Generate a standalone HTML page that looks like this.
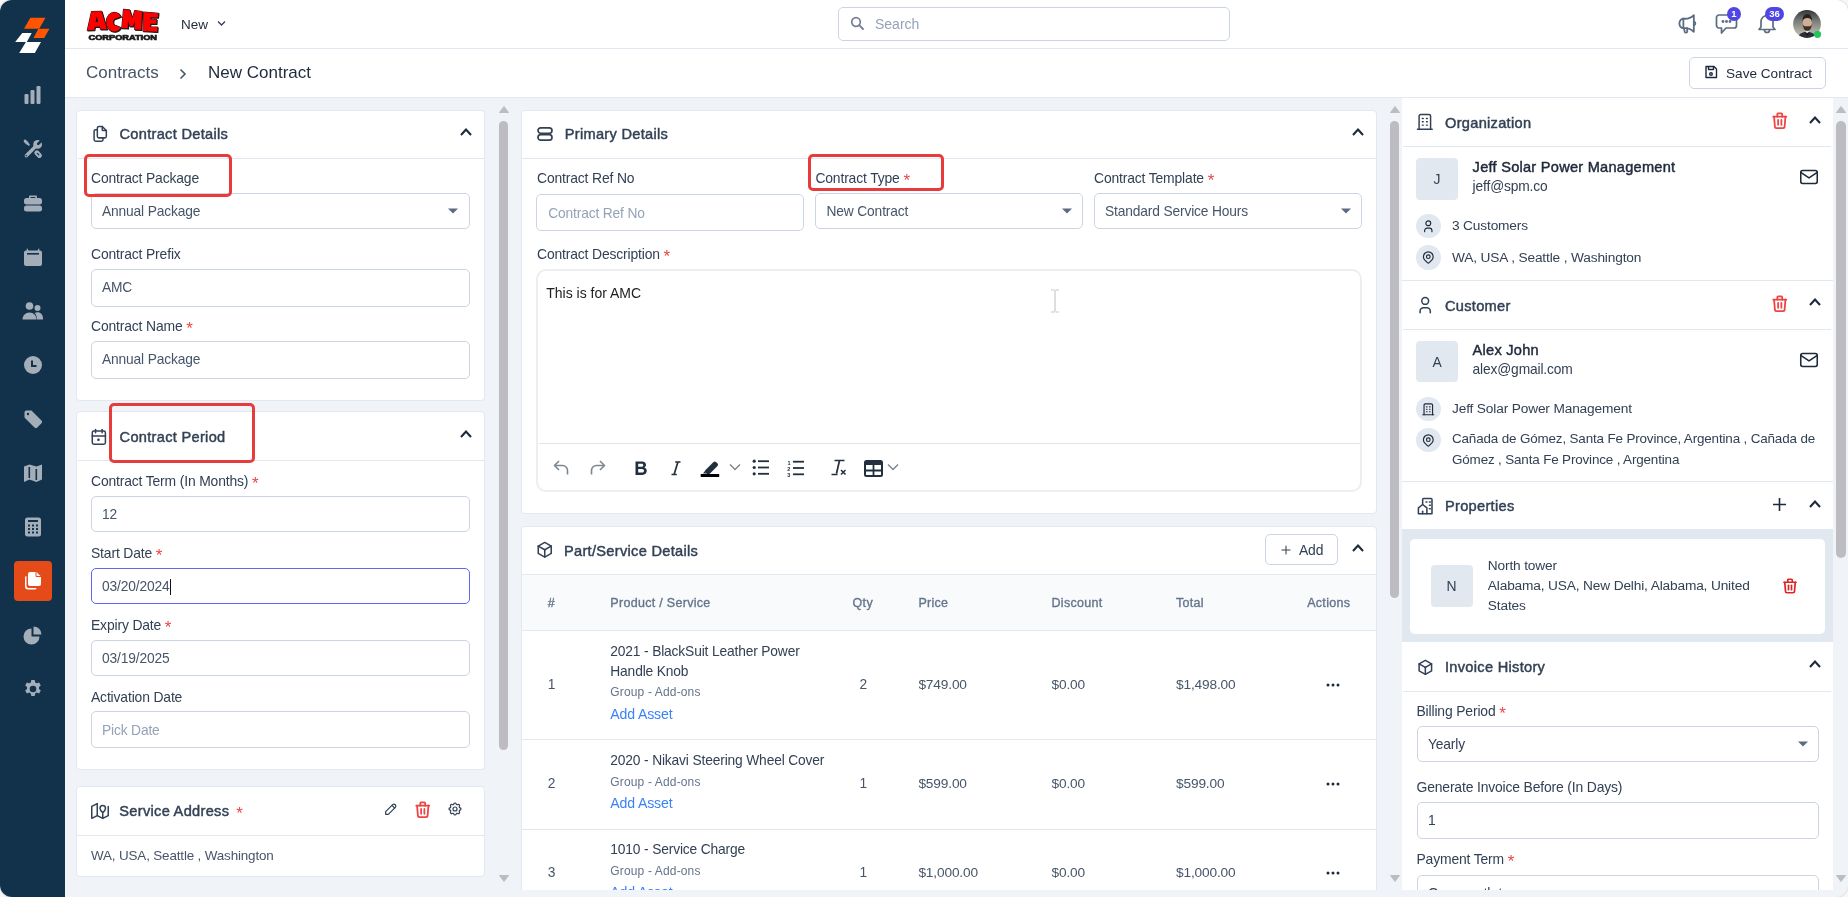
<!DOCTYPE html>
<html><head><meta charset="utf-8">
<style>
*{box-sizing:border-box;margin:0;padding:0}
html,body{width:1848px;height:897px;overflow:hidden;background:#f7f7f7}
body{font-family:"Liberation Sans",sans-serif;color:#334155;position:relative}
.a{position:absolute}
.frame{position:absolute;left:0;top:0;width:1848px;height:897px;border-radius:12px;overflow:hidden;background:#f0f3f8;will-change:transform;box-shadow:0 0 0 1px #e3e3e3}
.side{left:0;top:0;width:65px;height:897px;background:#12314b}
.hdr{left:65px;top:0;width:1783px;height:49px;background:#fff;border-bottom:1px solid #e2e8f0}
.bc{left:65px;top:49px;width:1783px;height:49px;background:#fff;border-bottom:1px solid #e2e8f0}
.card{position:absolute;background:#fff;border:1px solid #e2e8f0;border-radius:6px}
.chd{position:absolute;left:0;top:0;right:0;border-bottom:1px solid #e2e8f0}
.ttl{position:absolute;font-weight:bold;font-size:14.2px;color:#334155;white-space:nowrap}
.lbl{position:absolute;font-size:13.5px;color:#334155;white-space:nowrap}
.req{color:#ef4444}
.inp{position:absolute;border:1px solid #cbd5e1;border-radius:5px;background:#fff}
.val{position:absolute;left:10px;top:50%;transform:translateY(-50%);font-size:13.5px;color:#475569;white-space:nowrap}
.ph{color:#94a3b8}
.caret{position:absolute;right:11px;top:50%;margin-top:-2px;width:0;height:0;border-left:5px solid transparent;border-right:5px solid transparent;border-top:5px solid #5b6b80}
.rbox{position:absolute;border:3px solid #e53935;border-radius:4px}
.txt{position:absolute;white-space:nowrap}
svg{display:block}
.t{position:absolute;white-space:nowrap}
</style></head>
<body>
<div class="frame">

<!-- SIDEBAR -->
<div class="a side">
  <svg class="a" style="left:0;top:0" width="65" height="65" viewBox="0 0 65 65">
    <polygon points="30.3,17.8 45.5,17.8 39.2,28.7 24,28.7" fill="#ff5500"/>
    <polygon points="38.4,28.7 49.5,28.7 44.2,37.9 33.5,37.9" fill="#ff5500"/>
    <polygon points="22.3,33 31.7,33 26.8,41.9 15.2,41.9" fill="#fff"/>
    <polygon points="25.9,41.9 41,41.9 34.8,53 19.2,53" fill="#fff"/>
  </svg>
  <!-- chart -->
  <svg class="a" style="left:23px;top:85px" width="20" height="20" viewBox="0 0 20 20" fill="#a3aeb9">
    <rect x="1.5" y="9" width="4" height="10" rx="1.2"/><rect x="7.5" y="5" width="4" height="14" rx="1.2"/><rect x="13.5" y="1" width="4" height="18" rx="1.2"/>
  </svg>
  <!-- tools -->
  <svg class="a" style="left:23px;top:139px" width="20" height="20" viewBox="0 0 20 20">
    <g stroke-linecap="round" fill="none">
      <path d="M13.8 13.8L16.4 16.4" stroke="#a3aeb9" stroke-width="5"/>
      <path d="M14.3 14.3L15.9 15.9" stroke="#12314b" stroke-width="1.1"/>
      <path d="M1.8 1.8L5.8 5.8" stroke="#a3aeb9" stroke-width="2"/>
      <path d="M2.2 2.2L4 4" stroke="#a3aeb9" stroke-width="3"/>
      <path d="M3.3 16.7L12.5 7.5" stroke="#12314b" stroke-width="5.4"/>
      <path d="M3.3 16.7L12.5 7.5" stroke="#a3aeb9" stroke-width="3.4"/>
    </g>
    <circle cx="14.6" cy="5.4" r="4.4" fill="#a3aeb9"/>
    <path d="M15.2 4.8L18.5 1.5" stroke="#12314b" stroke-width="2.6" stroke-linecap="round"/>
    <circle cx="3.3" cy="16.7" r="0.8" fill="#12314b"/>
  </svg>
  <!-- briefcase -->
  <svg class="a" style="left:23px;top:193px" width="20" height="20" viewBox="0 0 20 20" fill="#a3aeb9">
    <path d="M7 2.5h6a1 1 0 0 1 1 1V5h-1.6V4H7.6v1H6V3.5a1 1 0 0 1 1-1z"/>
    <rect x="1" y="5" width="18" height="6.5" rx="2.5"/>
    <rect x="1" y="12.5" width="18" height="6" rx="2.5"/>
  </svg>
  <!-- calendar -->
  <svg class="a" style="left:23px;top:247px" width="20" height="20" viewBox="0 0 20 20" fill="#a3aeb9">
    <path d="M4 1l1.5 2.5h9L16 1l0.5 2.5H17a2 2 0 0 1 2 2V17a2 2 0 0 1-2 2H3a2 2 0 0 1-2-2V5.5a2 2 0 0 1 2-2h.5z"/>
    <rect x="4" y="6" width="12" height="1.6" fill="#12314b"/>
  </svg>
  <!-- users -->
  <svg class="a" style="left:22px;top:301px" width="22" height="20" viewBox="0 0 22 20" fill="#a3aeb9">
    <circle cx="7.5" cy="5" r="3.8"/><circle cx="15.5" cy="7" r="3"/>
    <path d="M0.5 18.5c0-4 3-7 7-7s7 3 7 7z"/><path d="M15 18.5c0-2.6-0.8-5-2.3-6.6 0.9-0.4 1.9-0.6 2.8-0.6 3.2 0 5.5 2.4 5.5 6.2v1z"/>
  </svg>
  <!-- clock -->
  <svg class="a" style="left:23px;top:355px" width="20" height="20" viewBox="0 0 20 20">
    <circle cx="10" cy="10" r="9" fill="#a3aeb9"/><path d="M9 5.5v5.5h4.5" stroke="#12314b" stroke-width="2" fill="none"/>
  </svg>
  <!-- tag -->
  <svg class="a" style="left:23px;top:409px" width="20" height="20" viewBox="0 0 20 20">
    <path d="M1.5 3.5a2 2 0 0 1 2-2h5l10 10a2 2 0 0 1 0 2.8l-4.2 4.2a2 2 0 0 1-2.8 0l-10-10z" fill="#a3aeb9"/><circle cx="5" cy="5" r="1.2" fill="#12314b"/>
  </svg>
  <!-- map -->
  <svg class="a" style="left:23px;top:463px" width="20" height="20" viewBox="0 0 20 20" fill="#a3aeb9">
    <path d="M1 3.5l5.5-2 7 2 5.5-2v15l-5.5 2.5-7-2.5L1 19z"/>
    <rect x="5.5" y="4" width="1.6" height="11" fill="#12314b"/><rect x="12.5" y="6" width="1.6" height="11" fill="#12314b"/>
  </svg>
  <!-- calculator -->
  <svg class="a" style="left:24px;top:517px" width="18" height="20" viewBox="0 0 18 20">
    <rect x="1" y="0.5" width="16" height="19" rx="2.5" fill="#a3aeb9"/>
    <rect x="4" y="3" width="10" height="2" fill="#12314b"/>
    <g fill="#12314b"><rect x="4" y="7.5" width="2" height="2"/><rect x="8" y="7.5" width="2" height="2"/><rect x="12" y="7.5" width="2" height="2"/><rect x="4" y="11" width="2" height="2"/><rect x="8" y="11" width="2" height="2"/><rect x="12" y="11" width="2" height="2"/><rect x="4" y="14.5" width="2" height="2"/><rect x="8" y="14.5" width="2" height="2"/><rect x="12" y="14.5" width="2" height="2"/></g>
  </svg>
  <!-- active contracts -->
  <div class="a" style="left:14px;top:561px;width:38px;height:40px;background:#e54a19;border-radius:4px"></div>
  <svg class="a" style="left:23px;top:571px" width="20" height="20" viewBox="0 0 20 20" fill="#fff">
    <path d="M7 1h6.5L18 5.5V13a2 2 0 0 1-2 2H7a2 2 0 0 1-2-2V3a2 2 0 0 1 2-2z"/>
    <path d="M2 6.5a1.5 1.5 0 0 1 1.5-1.5v9.5A2.5 2.5 0 0 0 6 17h7.5A1.5 1.5 0 0 1 12 18.5H5A3 3 0 0 1 2 15.5z"/>
    <path d="M13 1v4.5h5" fill="none" stroke="#e54a19" stroke-width="1"/>
  </svg>
  <!-- pie -->
  <svg class="a" style="left:23px;top:625px" width="20" height="20" viewBox="0 0 20 20" fill="#a3aeb9">
    <path d="M8.5 3.5A8 8 0 1 0 16.5 11.5H8.5z"/><path d="M10.5 1.5A8 8 0 0 1 18.5 9.5h-8z"/>
  </svg>
  <!-- gear -->
  <svg class="a" style="left:23px;top:679px" width="20" height="20" viewBox="0 0 20 20">
    <path fill="#a3aeb9" fill-rule="evenodd" d="M8.3 1h3.4l.5 2.4 1.6.9 2.3-.8 1.7 2.9-1.8 1.6v1.9l1.8 1.6-1.7 2.9-2.3-.8-1.6.9-.5 2.4H8.3l-.5-2.4-1.6-.9-2.3.8-1.7-2.9 1.8-1.6V8.1L2.2 6.4l1.7-2.9 2.3.8 1.6-.9zM10 6.7a3.3 3.3 0 1 0 0 6.6 3.3 3.3 0 0 0 0-6.6z"/>
  </svg>
</div>

<!-- HEADER -->
<div class="a hdr">
  <svg class="a" style="left:19px;top:6px" width="80" height="38" viewBox="0 0 80 38">
    <g fill="#ff0000" stroke="#1a1a1a" stroke-width="1.1" stroke-linejoin="round" paint-order="stroke" fill-rule="evenodd">
      <g transform="translate(0.7,0.7)" fill="#1a1a1a">
        <path d="M3.3 24.3L7.5 5.5 17.5 5.3 22.8 23.3 16.5 23.3 15.8 20.5 10.8 20.8 10.2 24z"/>
        <path d="M36.8 10.5A8 9.6 0 1 0 36.8 21.5L31.8 19.5A2.6 3.4 0 1 1 31.8 12.5z"/>
        <path d="M37.8 22L39.5 3.3 45.5 3.9 48.3 12.5 50.8 4.5 58 5.5 57 23.8 50.7 23.5 50.8 15 48.8 20.3 45.8 20.3 44 14 43.8 22.3z"/>
        <path d="M59.5 6L74.3 7.2 73.8 11.5 66.5 11.2 66.3 13.2 72.5 13.5 72.3 17.8 66.2 17.8 66 20.8 73.5 21 73.2 25.7 59 25z"/>
      </g>
      <path d="M3.3 24.3L7.5 5.5 17.5 5.3 22.8 23.3 16.5 23.3 15.8 20.5 10.8 20.8 10.2 24zM11.6 16L12.8 10 14.2 15.8z"/>
      <path d="M36.8 10.5A8 9.6 0 1 0 36.8 21.5L31.8 19.5A2.6 3.4 0 1 1 31.8 12.5z"/>
      <path d="M37.8 22L39.5 3.3 45.5 3.9 48.3 12.5 50.8 4.5 58 5.5 57 23.8 50.7 23.5 50.8 15 48.8 20.3 45.8 20.3 44 14 43.8 22.3z"/>
      <path d="M59.5 6L74.3 7.2 73.8 11.5 66.5 11.2 66.3 13.2 72.5 13.5 72.3 17.8 66.2 17.8 66 20.8 73.5 21 73.2 25.7 59 25z"/>
    </g>
    <text x="4.5" y="33.8" font-family="Liberation Sans" font-weight="bold" font-size="7.6" fill="#1a1a1a" stroke="#1a1a1a" stroke-width="0.7" textLength="68.5" lengthAdjust="spacingAndGlyphs">CORPORATION</text>
  </svg>
  <div class="txt" style="left:116px;top:17px;font-size:13.5px;color:#1e293b">New</div>
  <svg class="a" style="left:152px;top:20px" width="9" height="7" viewBox="0 0 9 7"><path d="M1 1.5l3.5 3.5 3.5-3.5" fill="none" stroke="#334155" stroke-width="1.3"/></svg>
  <div class="a" style="left:773px;top:7px;width:392px;height:34px;border:1px solid #cbd5e1;border-radius:5px"></div>
  <svg class="a" style="left:785px;top:16px" width="15" height="15" viewBox="0 0 15 15"><circle cx="6" cy="6" r="4.3" fill="none" stroke="#748194" stroke-width="1.7"/><path d="M9.2 9.2l3.8 3.8" stroke="#748194" stroke-width="1.9" stroke-linecap="round"/></svg>
  <div class="txt" style="left:810px;top:16px;font-size:14px;color:#94a3b8">Search</div>
  <!-- megaphone -->
  <svg class="a" style="left:1609.5px;top:12.5px" width="23" height="23" viewBox="0 0 22 22" fill="none" stroke="#5b6b80" stroke-width="1.7" stroke-linejoin="round" stroke-linecap="round">
    <path d="M7 5.5h2.5c3 0 6.5-1.5 8.5-3.5v16c-2-2-5.5-3.5-8.5-3.5H7a5 5 0 0 1 0-9z"/>
    <path d="M8 5.5v9"/><path d="M18 8.5a1.5 1.5 0 0 1 0 3"/><path d="M8.5 14.5l.8 3.5a1.3 1.3 0 0 0 2.5-.5l-.3-3"/>
  </svg>
  <!-- chat -->
  <svg class="a" style="left:1650px;top:13px" width="23" height="22" viewBox="0 0 23 22" fill="none" stroke="#5b6b80" stroke-width="1.7" stroke-linejoin="round">
    <path d="M4 2h15a2.5 2.5 0 0 1 2.5 2.5v8A2.5 2.5 0 0 1 19 15h-8l-4.5 5v-5H4a2.5 2.5 0 0 1-2.5-2.5v-8A2.5 2.5 0 0 1 4 2z"/>
    <circle cx="8" cy="8.5" r=".6" fill="#5b6b80"/><circle cx="11.5" cy="8.5" r=".6" fill="#5b6b80"/><circle cx="15" cy="8.5" r=".6" fill="#5b6b80"/>
  </svg>
  <div class="a" style="left:1662px;top:7px;width:14px;height:14px;border-radius:7px;background:#4f46e5;color:#fff;font-size:9.5px;font-weight:bold;text-align:center;line-height:14px">1</div>
  <!-- bell -->
  <svg class="a" style="left:1692px;top:13px" width="20" height="22" viewBox="0 0 20 22" fill="none" stroke="#5b6b80" stroke-width="1.7" stroke-linejoin="round">
    <path d="M10 2.5a6 6 0 0 1 6 6v5.5l2 2.5H2l2-2.5V8.5a6 6 0 0 1 6-6z"/><path d="M7.5 17a2.5 2.5 0 0 0 5 0"/>
  </svg>
  <div class="a" style="left:1700px;top:7px;width:19px;height:14px;border-radius:7px;background:#4f46e5;color:#fff;font-size:9.5px;font-weight:bold;text-align:center;line-height:14px">36</div>
  <!-- avatar -->
  <svg class="a" style="left:1728px;top:10px" width="30" height="30" viewBox="0 0 30 30">
    <defs>
      <linearGradient id="abg" x1="0" y1="0" x2="0" y2="1"><stop offset="0" stop-color="#2f3536"/><stop offset="0.35" stop-color="#777a76"/><stop offset="0.8" stop-color="#bdb9ab"/><stop offset="1" stop-color="#9a978c"/></linearGradient>
      <clipPath id="acc"><circle cx="14" cy="14" r="13.9"/></clipPath>
    </defs>
    <g clip-path="url(#acc)">
      <rect width="30" height="30" fill="url(#abg)"/>
      <path d="M3 30c1.5-5 5-8 11-8.5 6 .5 9.5 3.5 11 8.5z" fill="#2c3035"/>
      <path d="M12 20.5l2.2 3.2 2.3-3.2z" fill="#e6e6e6"/>
      <path d="M12.5 24l2-1.3 2 1.3-2 1.2z" fill="#15181b"/>
      <ellipse cx="14.3" cy="12.8" rx="4.6" ry="6.6" fill="#cfae96"/>
      <path d="M9.6 11.5c-.3-5 1.8-7.6 4.7-7.6s5 2.6 4.7 7.6c-.5-2.3-1.8-3.5-4.7-3.5s-4.2 1.2-4.7 3.5z" fill="#262220"/>
      <path d="M9.8 14c.3 4.8 2 6.8 4.5 6.8s4.2-2 4.5-6.8c-.6 1.8-1.6 2.6-4.5 2.6s-3.9-.8-4.5-2.6z" fill="#3d3029"/>
      <path d="M12.2 16.6h4.2" stroke="#5a4338" stroke-width=".8"/>
    </g>
    <circle cx="24.5" cy="24.3" r="3.6" fill="#22c55e"/>
  </svg>
</div>
<div class="a bc">
  <div class="txt" style="left:21px;top:14px;font-size:17px;color:#475569">Contracts</div>
  <svg class="a" style="left:113px;top:19px" width="9" height="12" viewBox="0 0 9 12"><path d="M2.5 1.5l4.5 4.5-4.5 4.5" fill="none" stroke="#475569" stroke-width="1.6"/></svg>
  <div class="txt" style="left:143px;top:14px;font-size:17px;color:#1e293b">New Contract</div>
  <div class="a" style="left:1624px;top:8px;width:137px;height:32px;border:1px solid #cbd5e1;border-radius:5px;background:#fff"></div>
  <svg class="a" style="left:1639px;top:16px" width="14" height="14" viewBox="0 0 14 14" fill="none" stroke="#1e293b" stroke-width="1.4" stroke-linejoin="round"><path d="M2 1.5h8l2.5 2.5v8.5H2z"/><path d="M4.5 1.5v3h5v-3"/><circle cx="7" cy="9" r="1.3"/></svg>
  <div class="txt" style="left:1661px;top:17px;font-size:13.6px;color:#1e293b">Save Contract</div>
</div>

<div class="a" style="left:76px;top:110px;width:409px;height:291px;background:#fff;border:1px solid #e2e8f0;border-radius:4px;"></div>
<div class="a" style="left:78px;top:158px;width:406px;height:1px;background:#e2e8f0"></div>
<svg class="a" style="left:89.9px;top:123.75px;" width="19.6" height="19.6" viewBox="0 0 24 24"><g fill="none" stroke="#334155" stroke-width="1.85" stroke-linecap="round" stroke-linejoin="round"><path d="M15 3v4a1 1 0 0 0 1 1h4"/><path d="M18 17h-7a2 2 0 0 1-2-2V5a2 2 0 0 1 2-2h4l5 5v7a2 2 0 0 1-2 2z"/><path d="M16 17v2a2 2 0 0 1-2 2H7a2 2 0 0 1-2-2V9a2 2 0 0 1 2-2h2"/></g></svg>
<div class="t " style="left:119.5px;top:124px;font-size:14.6px;line-height:20px;color:#334155;-webkit-text-stroke:0.45px #334155;letter-spacing:0.3px;">Contract Details</div>
<svg class="a" style="left:459px;top:126.69999999999999px;" width="14" height="10" viewBox="0 0 14 10"><path d="M2 8L7 2.6 12 8" fill="none" stroke="#1e293b" stroke-width="2.1" stroke-linejoin="miter"/></svg>
<div class="t " style="left:91px;top:168px;font-size:13.9px;line-height:20px;color:#334155;letter-spacing:-0.15px;">Contract Package</div>
<div class="a" style="left:91px;top:193.3px;width:378.5px;height:36.2px;background:#fff;border:1px solid #cbd5e1;border-radius:5px"></div>
<div class="t " style="left:102px;top:202px;font-size:13.79px;line-height:19px;color:#475569;letter-spacing:-0.15px;">Annual Package</div>
<svg class="a" style="left:448px;top:208px;" width="10" height="6" viewBox="0 0 10 6"><path d="M0 0.5h10L5 5.5z" fill="#5b6b80"/></svg>
<div class="a" style="left:84.4px;top:153.6px;width:148.1px;height:43.099999999999994px;border:3.5px solid #e83b3b;border-radius:5px"></div>
<div class="t " style="left:91px;top:244px;font-size:13.9px;line-height:20px;color:#334155;letter-spacing:-0.15px;">Contract Prefix</div>
<div class="a" style="left:91px;top:269px;width:378.5px;height:37.5px;background:#fff;border:1px solid #cbd5e1;border-radius:5px"></div>
<div class="t " style="left:102px;top:278px;font-size:13.79px;line-height:19px;color:#475569;letter-spacing:-0.15px;">AMC</div>
<div class="t " style="left:91px;top:316px;font-size:13.9px;line-height:20px;color:#334155;letter-spacing:-0.15px;">Contract Name <span style="color:#ef4444;font-size:17px;line-height:0;vertical-align:-2.5px">*</span></div>
<div class="a" style="left:91px;top:341px;width:378.5px;height:37.5px;background:#fff;border:1px solid #cbd5e1;border-radius:5px"></div>
<div class="t " style="left:102px;top:350px;font-size:13.79px;line-height:19px;color:#475569;letter-spacing:-0.15px;">Annual Package</div>
<div class="a" style="left:76px;top:411px;width:409px;height:359px;background:#fff;border:1px solid #e2e8f0;border-radius:4px;"></div>
<div class="a" style="left:78px;top:460px;width:406px;height:1px;background:#e2e8f0"></div>
<svg class="a" style="left:89.4px;top:426.5px;" width="19.7" height="19.7" viewBox="0 0 24 24"><g fill="none" stroke="#334155" stroke-width="1.85" stroke-linecap="round" stroke-linejoin="round"><rect x="4" y="5" width="16" height="16" rx="2"/><path d="M16 3v4"/><path d="M8 3v4"/><path d="M4 11h16"/><path d="M11 15h1v1h-1z"/></g></svg>
<div class="t " style="left:119.6px;top:427px;font-size:14.6px;line-height:20px;color:#334155;-webkit-text-stroke:0.45px #334155;letter-spacing:0.3px;">Contract Period</div>
<svg class="a" style="left:459px;top:428.7px;" width="14" height="10" viewBox="0 0 14 10"><path d="M2 8L7 2.6 12 8" fill="none" stroke="#1e293b" stroke-width="2.1" stroke-linejoin="miter"/></svg>
<div class="t " style="left:91px;top:471px;font-size:13.9px;line-height:20px;color:#334155;letter-spacing:-0.15px;">Contract Term (In Months) <span style="color:#ef4444;font-size:17px;line-height:0;vertical-align:-2.5px">*</span></div>
<div class="a" style="left:91px;top:495.6px;width:378.5px;height:36.8px;background:#fff;border:1px solid #cbd5e1;border-radius:5px"></div>
<div class="t " style="left:102px;top:505px;font-size:13.79px;line-height:19px;color:#475569;letter-spacing:-0.15px;">12</div>
<div class="t " style="left:91px;top:543px;font-size:13.9px;line-height:20px;color:#334155;letter-spacing:-0.15px;">Start Date <span style="color:#ef4444;font-size:17px;line-height:0;vertical-align:-2.5px">*</span></div>
<div class="a" style="left:91px;top:567.5px;width:378.5px;height:36.8px;background:#fff;border:1px solid #6366f1;border-radius:5px"></div>
<div class="t " style="left:102px;top:577px;font-size:13.79px;line-height:19px;color:#475569;letter-spacing:-0.15px;">03/20/2024</div>
<div class="t " style="left:91px;top:615px;font-size:13.9px;line-height:20px;color:#334155;letter-spacing:-0.15px;">Expiry Date <span style="color:#ef4444;font-size:17px;line-height:0;vertical-align:-2.5px">*</span></div>
<div class="a" style="left:91px;top:639.7px;width:378.5px;height:36.8px;background:#fff;border:1px solid #cbd5e1;border-radius:5px"></div>
<div class="t " style="left:102px;top:649px;font-size:13.79px;line-height:19px;color:#475569;letter-spacing:-0.15px;">03/19/2025</div>
<div class="t " style="left:91px;top:687px;font-size:13.9px;line-height:20px;color:#334155;letter-spacing:-0.15px;">Activation Date</div>
<div class="a" style="left:91px;top:711.4px;width:378.5px;height:36.8px;background:#fff;border:1px solid #cbd5e1;border-radius:5px"></div>
<div class="t " style="left:102px;top:721px;font-size:13.79px;line-height:19px;color:#94a3b8;letter-spacing:-0.15px;">Pick Date</div>
<div class="a" style="left:169.8px;top:579px;width:1.6px;height:16px;background:#111"></div>
<div class="a" style="left:108.6px;top:403px;width:146.9px;height:60.30000000000001px;border:3.5px solid #e83b3b;border-radius:5px"></div>
<div class="a" style="left:76px;top:785.5px;width:409px;height:91px;background:#fff;border:1px solid #e2e8f0;border-radius:4px;"></div>
<div class="a" style="left:77px;top:835px;width:407px;height:1px;background:#e2e8f0"></div>
<svg class="a" style="left:88.75px;top:799.6px;" width="22" height="22" viewBox="0 0 24 24"><g fill="none" stroke="#334155" stroke-width="1.65" stroke-linecap="round" stroke-linejoin="round"><path d="M9 4L3 7v13l6-3 6 3 6-3V7"/><path d="M9 4v13"/><path d="M15 15v5"/><path d="M18 9a3 3 0 1 0-6 0c0 2 3 5 3 5s3-3 3-5z"/></g></svg>
<div class="t " style="left:119.3px;top:801px;font-size:14.6px;line-height:20px;color:#334155;-webkit-text-stroke:0.45px #334155;letter-spacing:0.3px;">Service Address<span style="color:#ef4444;margin-left:7px;-webkit-text-stroke:0;font-size:17px;line-height:0;vertical-align:-2.5px">*</span></div>
<svg class="a" style="left:383px;top:801px;" width="16" height="16" viewBox="0 0 24 24"><g fill="none" stroke="#334155" stroke-width="1.8" stroke-linecap="round" stroke-linejoin="round"><path d="M4 20h4L18.5 9.5a2.83 2.83 0 0 0-4-4L4 16v4"/><path d="M13.5 6.5l4 4"/></g></svg>
<svg class="a" style="left:413.3px;top:799.6px;" width="19.5" height="19.5" viewBox="0 0 24 24"><g fill="none" stroke="#ef4444" stroke-width="2.2" stroke-linecap="round" stroke-linejoin="round"><path d="M4 7h16"/><path d="M10 11v6"/><path d="M14 11v6"/><path d="M5 7l1 12a2 2 0 0 0 2 2h8a2 2 0 0 0 2-2l1-12"/><path d="M9 7V4a1 1 0 0 1 1-1h4a1 1 0 0 1 1 1v3"/></g></svg>
<svg class="a" style="left:446.5px;top:801px;" width="16" height="16" viewBox="0 0 24 24"><g fill="none" stroke="#334155" stroke-width="1.8" stroke-linecap="round" stroke-linejoin="round"><path d="M10.33 4.32c.43-1.76 2.93-1.76 3.35 0a1.72 1.72 0 0 0 2.57 1.07c1.54-.94 3.31.83 2.37 2.37a1.72 1.72 0 0 0 1.07 2.57c1.76.43 1.76 2.93 0 3.35a1.72 1.72 0 0 0-1.07 2.57c.94 1.54-.83 3.31-2.37 2.37a1.72 1.72 0 0 0-2.57 1.07c-.43 1.76-2.93 1.76-3.35 0a1.72 1.72 0 0 0-2.57-1.07c-1.54.94-3.31-.83-2.37-2.37a1.72 1.72 0 0 0-1.07-2.57c-1.76-.43-1.76-2.93 0-3.35a1.72 1.72 0 0 0 1.07-2.57c-.94-1.54.83-3.31 2.37-2.37 1 .61 2.3.07 2.57-1.07z"/><circle cx="12" cy="12" r="3"/></g></svg>
<div class="t " style="left:91px;top:846px;font-size:13.43px;line-height:19px;color:#475569;letter-spacing:-0.15px;">WA, USA, Seattle , Washington</div>
<svg class="a" style="left:498.7px;top:106px;" width="10" height="7" viewBox="0 0 10 7"><path d="M0.5 6.5h9L5 0.5z" fill="#bdbcc2" stroke="#bdbcc2" stroke-width="1" stroke-linejoin="round"/></svg>
<div class="a" style="left:499.0px;top:121px;width:9.4px;height:628.6px;background:#bdbcc2;border-radius:5px"></div>
<svg class="a" style="left:498.7px;top:875px;" width="10" height="7" viewBox="0 0 10 7"><path d="M0.5 0.5h9L5 6.5z" fill="#bdbcc2" stroke="#bdbcc2" stroke-width="1" stroke-linejoin="round"/></svg>
<div class="a" style="left:521px;top:110px;width:856px;height:404px;background:#fff;border:1px solid #e2e8f0;border-radius:4px;"></div>
<div class="a" style="left:522px;top:158px;width:854px;height:1px;background:#e2e8f0"></div>
<svg class="a" style="left:537px;top:126.5px;" width="16" height="14" viewBox="0 0 16 14"><g fill="none" stroke="#334155" stroke-width="1.7"><rect x="1" y="0.9" width="14" height="5.4" rx="2.7"/><rect x="1" y="7.7" width="14" height="5.4" rx="2.7"/></g></svg>
<div class="t " style="left:564.7px;top:124px;font-size:14.6px;line-height:20px;color:#334155;-webkit-text-stroke:0.45px #334155;letter-spacing:0.3px;">Primary Details</div>
<svg class="a" style="left:1351px;top:126.6px;" width="14" height="10" viewBox="0 0 14 10"><path d="M2 8L7 2.6 12 8" fill="none" stroke="#1e293b" stroke-width="2.1" stroke-linejoin="miter"/></svg>
<div class="t " style="left:537px;top:168px;font-size:13.9px;line-height:20px;color:#334155;letter-spacing:-0.15px;">Contract Ref No</div>
<div class="t " style="left:815.4px;top:168px;font-size:13.9px;line-height:20px;color:#334155;letter-spacing:-0.15px;">Contract Type <span style="color:#ef4444;font-size:17px;line-height:0;vertical-align:-2.5px">*</span></div>
<div class="t " style="left:1094px;top:168px;font-size:13.9px;line-height:20px;color:#334155;letter-spacing:-0.15px;">Contract Template <span style="color:#ef4444;font-size:17px;line-height:0;vertical-align:-2.5px">*</span></div>
<div class="a" style="left:536.4px;top:194.2px;width:267.2px;height:37.3px;background:#fff;border:1px solid #cbd5e1;border-radius:5px"></div>
<div class="t " style="left:548.2px;top:204px;font-size:13.79px;line-height:19px;color:#94a3b8;letter-spacing:-0.15px;">Contract Ref No</div>
<div class="a" style="left:815px;top:193.3px;width:267.8px;height:36.2px;background:#fff;border:1px solid #cbd5e1;border-radius:5px"></div>
<div class="t " style="left:826.5px;top:202px;font-size:13.79px;line-height:19px;color:#475569;letter-spacing:-0.15px;">New Contract</div>
<svg class="a" style="left:1062px;top:208px;" width="10" height="6" viewBox="0 0 10 6"><path d="M0 0.5h10L5 5.5z" fill="#5b6b80"/></svg>
<div class="a" style="left:1094px;top:193.3px;width:267.5px;height:36.2px;background:#fff;border:1px solid #cbd5e1;border-radius:5px"></div>
<div class="t " style="left:1105px;top:202px;font-size:13.79px;line-height:19px;color:#475569;letter-spacing:-0.15px;">Standard Service Hours</div>
<svg class="a" style="left:1340.5px;top:208px;" width="10" height="6" viewBox="0 0 10 6"><path d="M0 0.5h10L5 5.5z" fill="#5b6b80"/></svg>
<div class="a" style="left:808.4px;top:153.6px;width:135.30000000000007px;height:37.0px;border:3.5px solid #e83b3b;border-radius:5px"></div>
<div class="t " style="left:537px;top:244px;font-size:13.9px;line-height:20px;color:#334155;letter-spacing:-0.15px;">Contract Description <span style="color:#ef4444;font-size:17px;line-height:0;vertical-align:-2.5px">*</span></div>
<div class="a" style="left:536px;top:269px;width:825.5px;height:223px;border:2px solid #eeeeee;border-radius:10px;background:#fff"></div>
<div class="a" style="left:538.5px;top:443px;width:821px;height:1px;background:#e3e3e3"></div>
<div class="t " style="left:546.2px;top:283px;font-size:14px;line-height:20px;color:#222222;letter-spacing:0;">This is for AMC</div>
<svg class="a" style="left:1050px;top:289px;" width="10" height="24" viewBox="0 0 10 24"><path d="M1 1h3.5M5.5 1H9M1 23h3.5M5.5 23H9M5 1.5v21" stroke="#c8c8c8" stroke-width="1.2" fill="none"/></svg>
<svg class="a" style="left:552px;top:458px;" width="18" height="18" viewBox="0 0 18 18"><path d="M7 3L2.5 7.5 7 12" fill="none" stroke="#7e8791" stroke-width="1.6" stroke-linejoin="round"/><path d="M3 7.5h7.5a5 5 0 0 1 5 5v4" fill="none" stroke="#7e8791" stroke-width="1.6"/></svg>
<svg class="a" style="left:589px;top:458px;" width="18" height="18" viewBox="0 0 18 18"><path d="M11 3l4.5 4.5L11 12" fill="none" stroke="#7e8791" stroke-width="1.6" stroke-linejoin="round"/><path d="M15 7.5H7.5a5 5 0 0 0-5 5v4" fill="none" stroke="#7e8791" stroke-width="1.6"/></svg>
<svg class="a" style="left:634.5px;top:461px;" width="13" height="14.5" viewBox="0 0 13 14.5"><path fill-rule="evenodd" fill="#222f3e" d="M0.5 0.5H7C9.5 0.5 11 2 11 3.7C11 5 10.3 5.9 9.3 6.4C10.8 6.9 11.8 8.1 11.8 9.8C11.8 12 10 13.9 7.3 13.9H0.5ZM3.2 2.7V5.8H6.6C7.7 5.8 8.3 5.1 8.3 4.25C8.3 3.35 7.7 2.7 6.6 2.7ZM3.2 7.9V11.6H7C8.3 11.6 9 10.8 9 9.75C9 8.7 8.3 7.9 7 7.9Z"/></svg>
<svg class="a" style="left:670.5px;top:461px;" width="10" height="14.5" viewBox="0 0 10 14.5"><path d="M4.2 1h5.3M0.5 13.5h5.3M6.9 1L3.1 13.5" fill="none" stroke="#222f3e" stroke-width="1.7"/></svg>
<svg class="a" style="left:700px;top:459px;" width="20" height="19" viewBox="0 0 20 19"><path d="M4.5 12.5l2.5 2.5h2.5l8-8a1.8 1.8 0 0 0 0-2.5l-1.5-1.5a1.8 1.8 0 0 0-2.5 0l-8 8z" fill="#222f3e"/><path d="M4.5 12.5L3 14.5h4z" fill="#222f3e"/><rect x="0.7" y="15" width="18.5" height="3" fill="#000"/></svg>
<svg class="a" style="left:729px;top:463px;" width="12" height="9" viewBox="0 0 12 9"><path d="M1 1.5l5 5 5-5" fill="none" stroke="#7e8791" stroke-width="1.5"/></svg>
<svg class="a" style="left:752px;top:459px;" width="18" height="17" viewBox="0 0 18 17"><g fill="#222f3e"><circle cx="2.2" cy="2.2" r="1.6"/><circle cx="2.2" cy="8.5" r="1.6"/><circle cx="2.2" cy="14.8" r="1.6"/><rect x="6" y="1.3" width="11" height="1.8"/><rect x="6" y="7.6" width="11" height="1.8"/><rect x="6" y="13.9" width="11" height="1.8"/></g></svg>
<svg class="a" style="left:786.5px;top:459px;" width="18" height="18" viewBox="0 0 18 18"><g fill="#222f3e"><rect x="6" y="1.8" width="11" height="1.8"/><rect x="6" y="8.1" width="11" height="1.8"/><rect x="6" y="14.4" width="11" height="1.8"/></g><text x="0.5" y="5.5" font-size="5.5" font-family="Liberation Sans" font-weight="bold" fill="#222f3e">1</text><text x="0.3" y="11.5" font-size="5.5" font-family="Liberation Sans" font-weight="bold" fill="#222f3e">2</text><text x="0.3" y="17.5" font-size="5.5" font-family="Liberation Sans" font-weight="bold" fill="#222f3e">3</text></svg>
<svg class="a" style="left:830px;top:459px;" width="18" height="18" viewBox="0 0 18 18"><path d="M4.5 1.5h10M9.5 1.5l-3 13M1.5 15.5h6" fill="none" stroke="#222f3e" stroke-width="1.7"/><path d="M11 11l4.5 4.5M15.5 11L11 15.5" fill="none" stroke="#222f3e" stroke-width="1.5"/></svg>
<svg class="a" style="left:863.5px;top:459.5px;" width="19" height="17" viewBox="0 0 19 17"><rect x="1" y="1" width="17" height="15" rx="1.5" fill="none" stroke="#222f3e" stroke-width="2"/><rect x="1" y="1" width="17" height="4" fill="#222f3e"/><path d="M9.5 5v11M1 10.5h17" stroke="#222f3e" stroke-width="1.8"/></svg>
<svg class="a" style="left:887px;top:463px;" width="12" height="9" viewBox="0 0 12 9"><path d="M1 1.5l5 5 5-5" fill="none" stroke="#7e8791" stroke-width="1.5"/></svg>
<div class="a" style="left:521px;top:526px;width:856px;height:364px;overflow:hidden">
<div class="a" style="left:0px;top:0px;width:856px;height:420px;background:#fff;border:1px solid #e2e8f0;border-radius:4px;"></div>
<div class="a" style="left:1px;top:48px;width:854px;height:1px;background:#e2e8f0"></div>
<svg class="a" style="left:14.299999999999955px;top:14.299999999999955px;" width="19.5" height="19.5" viewBox="0 0 24 24"><g fill="none" stroke="#334155" stroke-width="1.9" stroke-linecap="round" stroke-linejoin="round"><path d="M12 3l8 4.5v9L12 21l-8-4.5v-9z"/><path d="M12 12l8-4.5"/><path d="M12 12v9"/><path d="M12 12L4 7.5"/></g></svg>
<div class="t " style="left:43px;top:15px;font-size:14.6px;line-height:20px;color:#334155;-webkit-text-stroke:0.45px #334155;letter-spacing:0.3px;">Part/Service Details</div>
<div class="a" style="left:743.5px;top:8.3px;width:73px;height:31.2px;border:1px solid #cbd5e1;border-radius:5px;background:#fff"></div>
<svg class="a" style="left:758px;top:16.5px;" width="14" height="14" viewBox="0 0 24 24"><g fill="none" stroke="#334155" stroke-width="1.8" stroke-linecap="round" stroke-linejoin="round"><path d="M12 5v14"/><path d="M5 12h14"/></g></svg>
<div class="t " style="left:778px;top:14px;font-size:13.9px;line-height:20px;color:#334155;letter-spacing:-0.15px;">Add</div>
<svg class="a" style="left:830px;top:17px;" width="14" height="10" viewBox="0 0 14 10"><path d="M2 8L7 2.6 12 8" fill="none" stroke="#1e293b" stroke-width="2.1" stroke-linejoin="miter"/></svg>
<div class="a" style="left:1px;top:49px;width:854px;height:55.5px;background:#f8fafc"></div>
<div class="a" style="left:1px;top:104.4px;width:854px;height:1px;background:#e2e8f0"></div>
<div class="t " style="left:26.700000000000045px;top:68px;font-size:12.5px;line-height:18px;color:#64748b;-webkit-text-stroke:0.45px #64748b;letter-spacing:0.3px;-webkit-text-stroke-width:0.35px;">#</div>
<div class="t " style="left:89.29999999999995px;top:68px;font-size:12.5px;line-height:18px;color:#64748b;-webkit-text-stroke:0.45px #64748b;letter-spacing:0.3px;-webkit-text-stroke-width:0.35px;">Product / Service</div>
<div class="t " style="left:331.6px;top:68px;font-size:12.5px;line-height:18px;color:#64748b;-webkit-text-stroke:0.45px #64748b;letter-spacing:0.3px;-webkit-text-stroke-width:0.35px;">Qty</div>
<div class="t " style="left:397.4px;top:68px;font-size:12.5px;line-height:18px;color:#64748b;-webkit-text-stroke:0.45px #64748b;letter-spacing:0.3px;-webkit-text-stroke-width:0.35px;">Price</div>
<div class="t " style="left:530.5px;top:68px;font-size:12.5px;line-height:18px;color:#64748b;-webkit-text-stroke:0.45px #64748b;letter-spacing:0.3px;-webkit-text-stroke-width:0.35px;">Discount</div>
<div class="t " style="left:655px;top:68px;font-size:12.5px;line-height:18px;color:#64748b;-webkit-text-stroke:0.45px #64748b;letter-spacing:0.3px;-webkit-text-stroke-width:0.35px;">Total</div>
<div class="t " style="left:786.2px;top:68px;font-size:12.5px;line-height:18px;color:#64748b;-webkit-text-stroke:0.45px #64748b;letter-spacing:0.3px;-webkit-text-stroke-width:0.35px;">Actions</div>
<div class="t " style="left:26.700000000000045px;top:149px;font-size:13.79px;line-height:19px;color:#475569;letter-spacing:-0.15px;">1</div>
<div class="t " style="left:89.29999999999995px;top:116px;font-size:13.79px;line-height:19px;color:#334155;letter-spacing:-0.15px;">2021 - BlackSuit Leather Power</div>
<div class="t " style="left:89.29999999999995px;top:136px;font-size:13.79px;line-height:19px;color:#334155;letter-spacing:-0.15px;">Handle Knob</div>
<div class="t " style="left:89.29999999999995px;top:157px;font-size:12.0px;line-height:18px;color:#64748b;letter-spacing:0.15px;">Group - Add-ons</div>
<div class="t " style="left:89.29999999999995px;top:178px;font-size:14.1px;line-height:20px;color:#3b82f6;letter-spacing:-0.15px;">Add Asset</div>
<div class="t " style="left:338.5px;top:149px;font-size:13.79px;line-height:19px;color:#475569;letter-spacing:-0.15px;">2</div>
<div class="t " style="left:397.4px;top:149px;font-size:13.69px;line-height:19px;color:#475569;letter-spacing:-0.15px;">$749.00</div>
<div class="t " style="left:530.5px;top:149px;font-size:13.69px;line-height:19px;color:#475569;letter-spacing:-0.15px;">$0.00</div>
<div class="t " style="left:655px;top:149px;font-size:13.69px;line-height:19px;color:#475569;letter-spacing:-0.15px;">$1,498.00</div>
<svg class="a" style="left:805px;top:157px;" width="14" height="4" viewBox="0 0 14 4"><g fill="#1e293b"><circle cx="2" cy="2" r="1.5"/><circle cx="7" cy="2" r="1.5"/><circle cx="12" cy="2" r="1.5"/></g></svg>
<div class="a" style="left:1px;top:213px;width:854px;height:1px;background:#e2e8f0"></div>
<div class="t " style="left:26.700000000000045px;top:248px;font-size:13.79px;line-height:19px;color:#475569;letter-spacing:-0.15px;">2</div>
<div class="t " style="left:89.29999999999995px;top:225px;font-size:13.79px;line-height:19px;color:#334155;letter-spacing:-0.15px;">2020 - Nikavi Steering Wheel Cover</div>
<div class="t " style="left:89.29999999999995px;top:247px;font-size:12.0px;line-height:18px;color:#64748b;letter-spacing:0.15px;">Group - Add-ons</div>
<div class="t " style="left:89.29999999999995px;top:267px;font-size:14.1px;line-height:20px;color:#3b82f6;letter-spacing:-0.15px;">Add Asset</div>
<div class="t " style="left:338.5px;top:248px;font-size:13.79px;line-height:19px;color:#475569;letter-spacing:-0.15px;">1</div>
<div class="t " style="left:397.4px;top:248px;font-size:13.69px;line-height:19px;color:#475569;letter-spacing:-0.15px;">$599.00</div>
<div class="t " style="left:530.5px;top:248px;font-size:13.69px;line-height:19px;color:#475569;letter-spacing:-0.15px;">$0.00</div>
<div class="t " style="left:655px;top:248px;font-size:13.69px;line-height:19px;color:#475569;letter-spacing:-0.15px;">$599.00</div>
<svg class="a" style="left:805px;top:256px;" width="14" height="4" viewBox="0 0 14 4"><g fill="#1e293b"><circle cx="2" cy="2" r="1.5"/><circle cx="7" cy="2" r="1.5"/><circle cx="12" cy="2" r="1.5"/></g></svg>
<div class="a" style="left:1px;top:302.5px;width:854px;height:1px;background:#e2e8f0"></div>
<div class="t " style="left:26.700000000000045px;top:337px;font-size:13.79px;line-height:19px;color:#475569;letter-spacing:-0.15px;">3</div>
<div class="t " style="left:89.29999999999995px;top:314px;font-size:13.79px;line-height:19px;color:#334155;letter-spacing:-0.15px;">1010 - Service Charge</div>
<div class="t " style="left:89.29999999999995px;top:336px;font-size:12.0px;line-height:18px;color:#64748b;letter-spacing:0.15px;">Group - Add-ons</div>
<div class="t " style="left:89.29999999999995px;top:356px;font-size:14.1px;line-height:20px;color:#3b82f6;letter-spacing:-0.15px;">Add Asset</div>
<div class="t " style="left:338.5px;top:337px;font-size:13.79px;line-height:19px;color:#475569;letter-spacing:-0.15px;">1</div>
<div class="t " style="left:397.4px;top:337px;font-size:13.69px;line-height:19px;color:#475569;letter-spacing:-0.15px;">$1,000.00</div>
<div class="t " style="left:530.5px;top:337px;font-size:13.69px;line-height:19px;color:#475569;letter-spacing:-0.15px;">$0.00</div>
<div class="t " style="left:655px;top:337px;font-size:13.69px;line-height:19px;color:#475569;letter-spacing:-0.15px;">$1,000.00</div>
<svg class="a" style="left:805px;top:345px;" width="14" height="4" viewBox="0 0 14 4"><g fill="#1e293b"><circle cx="2" cy="2" r="1.5"/><circle cx="7" cy="2" r="1.5"/><circle cx="12" cy="2" r="1.5"/></g></svg>
</div>
<svg class="a" style="left:1389.5px;top:106px;" width="10" height="7" viewBox="0 0 10 7"><path d="M0.5 6.5h9L5 0.5z" fill="#bdbcc2" stroke="#bdbcc2" stroke-width="1" stroke-linejoin="round"/></svg>
<div class="a" style="left:1389.8px;top:121px;width:9.4px;height:476.6px;background:#bdbcc2;border-radius:5px"></div>
<svg class="a" style="left:1389.5px;top:875px;" width="10" height="7" viewBox="0 0 10 7"><path d="M0.5 0.5h9L5 6.5z" fill="#bdbcc2" stroke="#bdbcc2" stroke-width="1" stroke-linejoin="round"/></svg>
<div class="a" style="left:1402px;top:98px;width:431px;height:792px;background:#fff"></div>
<div class="a" style="left:1403px;top:146px;width:428px;height:1px;background:#e2e8f0"></div>
<svg class="a" style="left:1415.3px;top:112.1px;" width="19.7" height="19.7" viewBox="0 0 24 24"><g fill="none" stroke="#334155" stroke-width="1.8" stroke-linecap="round" stroke-linejoin="round"><path d="M3 21h18"/><path d="M5 21V5a2 2 0 0 1 2-2h10a2 2 0 0 1 2 2v16"/><path d="M9 8h1"/><path d="M9 12h1"/><path d="M9 16h1"/><path d="M14 8h1"/><path d="M14 12h1"/><path d="M14 16h1"/></g></svg>
<div class="t " style="left:1445px;top:113px;font-size:14.6px;line-height:20px;color:#334155;-webkit-text-stroke:0.45px #334155;letter-spacing:0.3px;">Organization</div>
<svg class="a" style="left:1769.75px;top:110.6px;" width="19.5" height="19.5" viewBox="0 0 24 24"><g fill="none" stroke="#ef4444" stroke-width="2.2" stroke-linecap="round" stroke-linejoin="round"><path d="M4 7h16"/><path d="M10 11v6"/><path d="M14 11v6"/><path d="M5 7l1 12a2 2 0 0 0 2 2h8a2 2 0 0 0 2-2l1-12"/><path d="M9 7V4a1 1 0 0 1 1-1h4a1 1 0 0 1 1 1v3"/></g></svg>
<svg class="a" style="left:1808px;top:114.5px;" width="14" height="10" viewBox="0 0 14 10"><path d="M2 8L7 2.6 12 8" fill="none" stroke="#1e293b" stroke-width="2.1" stroke-linejoin="miter"/></svg>
<div class="a" style="left:1416px;top:158px;width:42px;height:42px;background:#e2e8f0;border-radius:4px"></div>
<div class="t " style="left:1433.5px;top:169px;font-size:13.9px;line-height:20px;color:#334155;letter-spacing:-0.15px;">J</div>
<div class="t " style="left:1472.6px;top:157px;font-size:14.6px;line-height:20px;color:#1e293b;-webkit-text-stroke:0.45px #1e293b;letter-spacing:0.25px;">Jeff Solar Power Management</div>
<div class="t " style="left:1472.6px;top:177px;font-size:13.79px;line-height:19px;color:#334155;letter-spacing:-0.15px;">jeff@spm.co</div>
<svg class="a" style="left:1797.5px;top:166px;" width="22" height="22" viewBox="0 0 24 24"><g fill="none" stroke="#1e293b" stroke-width="1.7" stroke-linecap="round" stroke-linejoin="round"><rect x="3" y="5" width="18" height="14" rx="2"/><path d="M3 7l9 6 9-6"/></g></svg>
<div class="a" style="left:1416px;top:213.7px;width:24.6px;height:24.6px;background:#e2e8f0;border-radius:50%"></div>
<svg class="a" style="left:1421px;top:218.8px;" width="14.6" height="14.6" viewBox="0 0 24 24"><g fill="none" stroke="#1e293b" stroke-width="1.9" stroke-linecap="round" stroke-linejoin="round"><circle cx="12" cy="7" r="4"/><path d="M6 21v-2a4 4 0 0 1 4-4h4a4 4 0 0 1 4 4v2"/></g></svg>
<div class="t " style="left:1452px;top:216px;font-size:13.69px;line-height:19px;color:#334155;letter-spacing:-0.15px;">3 Customers</div>
<div class="a" style="left:1416px;top:245.0px;width:24.6px;height:24.6px;background:#e2e8f0;border-radius:50%"></div>
<svg class="a" style="left:1421px;top:250.10000000000002px;" width="14.6" height="14.6" viewBox="0 0 24 24"><g fill="none" stroke="#1e293b" stroke-width="1.9" stroke-linecap="round" stroke-linejoin="round"><circle cx="12" cy="11" r="3"/><path d="M17.66 16.66L13.41 20.9a2 2 0 0 1-2.83 0l-4.24-4.24a8 8 0 1 1 11.32 0z"/></g></svg>
<div class="t " style="left:1452px;top:248px;font-size:13.69px;line-height:19px;color:#334155;letter-spacing:-0.15px;">WA, USA , Seattle , Washington</div>
<div class="a" style="left:1402px;top:280.4px;width:431px;height:1px;background:#e2e8f0"></div>
<div class="a" style="left:1403px;top:328.7px;width:428px;height:1px;background:#e2e8f0"></div>
<svg class="a" style="left:1414.6px;top:294.85px;" width="20.4" height="20.4" viewBox="0 0 24 24"><g fill="none" stroke="#334155" stroke-width="1.8" stroke-linecap="round" stroke-linejoin="round"><circle cx="12" cy="7" r="4"/><path d="M6 21v-2a4 4 0 0 1 4-4h4a4 4 0 0 1 4 4v2"/></g></svg>
<div class="t " style="left:1445px;top:296px;font-size:14.6px;line-height:20px;color:#334155;-webkit-text-stroke:0.45px #334155;letter-spacing:0.3px;">Customer</div>
<svg class="a" style="left:1769.75px;top:293.5px;" width="19.5" height="19.5" viewBox="0 0 24 24"><g fill="none" stroke="#ef4444" stroke-width="2.2" stroke-linecap="round" stroke-linejoin="round"><path d="M4 7h16"/><path d="M10 11v6"/><path d="M14 11v6"/><path d="M5 7l1 12a2 2 0 0 0 2 2h8a2 2 0 0 0 2-2l1-12"/><path d="M9 7V4a1 1 0 0 1 1-1h4a1 1 0 0 1 1 1v3"/></g></svg>
<svg class="a" style="left:1808px;top:297.4px;" width="14" height="10" viewBox="0 0 14 10"><path d="M2 8L7 2.6 12 8" fill="none" stroke="#1e293b" stroke-width="2.1" stroke-linejoin="miter"/></svg>
<div class="a" style="left:1416px;top:341.3px;width:42px;height:41px;background:#e2e8f0;border-radius:4px"></div>
<div class="t " style="left:1432.5px;top:352px;font-size:13.9px;line-height:20px;color:#334155;letter-spacing:-0.15px;">A</div>
<div class="t " style="left:1472.6px;top:340px;font-size:14.6px;line-height:20px;color:#1e293b;-webkit-text-stroke:0.45px #1e293b;letter-spacing:0.25px;">Alex John</div>
<div class="t " style="left:1472.6px;top:360px;font-size:13.79px;line-height:19px;color:#334155;letter-spacing:-0.15px;">alex@gmail.com</div>
<svg class="a" style="left:1797.5px;top:349px;" width="22" height="22" viewBox="0 0 24 24"><g fill="none" stroke="#1e293b" stroke-width="1.7" stroke-linecap="round" stroke-linejoin="round"><rect x="3" y="5" width="18" height="14" rx="2"/><path d="M3 7l9 6 9-6"/></g></svg>
<div class="a" style="left:1416px;top:396.7px;width:24.6px;height:24.6px;background:#e2e8f0;border-radius:50%"></div>
<svg class="a" style="left:1421px;top:401.8px;" width="14.6" height="14.6" viewBox="0 0 24 24"><g fill="none" stroke="#1e293b" stroke-width="1.9" stroke-linecap="round" stroke-linejoin="round"><path d="M3 21h18"/><path d="M5 21V5a2 2 0 0 1 2-2h10a2 2 0 0 1 2 2v16"/><path d="M9 8h1"/><path d="M9 12h1"/><path d="M9 16h1"/><path d="M14 8h1"/><path d="M14 12h1"/><path d="M14 16h1"/></g></svg>
<div class="t " style="left:1452px;top:399px;font-size:13.69px;line-height:19px;color:#334155;letter-spacing:-0.15px;">Jeff Solar Power Management</div>
<div class="a" style="left:1416px;top:427.7px;width:24.6px;height:24.6px;background:#e2e8f0;border-radius:50%"></div>
<svg class="a" style="left:1421px;top:432.8px;" width="14.6" height="14.6" viewBox="0 0 24 24"><g fill="none" stroke="#1e293b" stroke-width="1.9" stroke-linecap="round" stroke-linejoin="round"><circle cx="12" cy="11" r="3"/><path d="M17.66 16.66L13.41 20.9a2 2 0 0 1-2.83 0l-4.24-4.24a8 8 0 1 1 11.32 0z"/></g></svg>
<div class="t " style="left:1452px;top:429px;font-size:13.43px;line-height:19px;color:#334155;letter-spacing:-0.15px;">Cañada de Gómez, Santa Fe Province, Argentina , Cañada de</div>
<div class="t " style="left:1452px;top:450px;font-size:13.43px;line-height:19px;color:#334155;letter-spacing:-0.15px;">Gómez , Santa Fe Province , Argentina</div>
<div class="a" style="left:1402px;top:481.3px;width:431px;height:1px;background:#e2e8f0"></div>
<div class="a" style="left:1403px;top:529px;width:428px;height:1px;background:#e2e8f0"></div>
<svg class="a" style="left:1414.6px;top:496.25px;" width="20.4" height="20.4" viewBox="0 0 24 24"><g fill="none" stroke="#334155" stroke-width="1.8" stroke-linecap="round" stroke-linejoin="round"><path d="M4 21v-7l5-4 5 4v7z"/><path d="M9 21v-3"/><path d="M14 21h6V4a1 1 0 0 0-1-1h-9a1 1 0 0 0-1 1v6"/><path d="M13 7h1"/><path d="M17 7h1"/><path d="M17 11h1"/><path d="M17 15h1"/></g></svg>
<div class="t " style="left:1445px;top:496px;font-size:14.6px;line-height:20px;color:#334155;-webkit-text-stroke:0.45px #334155;letter-spacing:0.3px;">Properties</div>
<svg class="a" style="left:1772px;top:497px;" width="15" height="15" viewBox="0 0 15 15"><path d="M7.5 1v13M1 7.5h13" stroke="#1e293b" stroke-width="1.6"/></svg>
<svg class="a" style="left:1808px;top:498.5px;" width="14" height="10" viewBox="0 0 14 10"><path d="M2 8L7 2.6 12 8" fill="none" stroke="#1e293b" stroke-width="2.1" stroke-linejoin="miter"/></svg>
<div class="a" style="left:1402px;top:529px;width:431px;height:113.3px;background:#e2e8f0"></div>
<div class="a" style="left:1410px;top:539px;width:415px;height:95px;background:#fff;border-radius:5px"></div>
<div class="a" style="left:1431.4px;top:565.3px;width:41.4px;height:41.4px;background:#e2e8f0;border-radius:4px"></div>
<div class="t " style="left:1446.5px;top:576px;font-size:13.9px;line-height:20px;color:#334155;letter-spacing:-0.15px;">N</div>
<div class="t " style="left:1487.8px;top:556px;font-size:13.69px;line-height:19px;color:#334155;letter-spacing:-0.15px;">North tower</div>
<div class="t " style="left:1487.8px;top:576px;font-size:13.69px;line-height:19px;color:#334155;letter-spacing:-0.15px;">Alabama, USA, New Delhi, Alabama, United</div>
<div class="t " style="left:1487.8px;top:596px;font-size:13.69px;line-height:19px;color:#334155;letter-spacing:-0.15px;">States</div>
<svg class="a" style="left:1780.8px;top:577px;" width="18" height="18" viewBox="0 0 24 24"><g fill="none" stroke="#dc2626" stroke-width="2.3" stroke-linecap="round" stroke-linejoin="round"><path d="M4 7h16"/><path d="M10 11v6"/><path d="M14 11v6"/><path d="M5 7l1 12a2 2 0 0 0 2 2h8a2 2 0 0 0 2-2l1-12"/><path d="M9 7V4a1 1 0 0 1 1-1h4a1 1 0 0 1 1 1v3"/></g></svg>
<div class="a" style="left:1403px;top:691.2px;width:428px;height:1px;background:#e2e8f0"></div>
<svg class="a" style="left:1415.7px;top:658.3px;" width="18.7" height="18.7" viewBox="0 0 24 24"><g fill="none" stroke="#334155" stroke-width="1.95" stroke-linecap="round" stroke-linejoin="round"><path d="M12 3l8 4.5v9L12 21l-8-4.5v-9z"/><path d="M12 12l8-4.5"/><path d="M12 12v9"/><path d="M12 12L4 7.5"/></g></svg>
<div class="t " style="left:1445px;top:657px;font-size:14.6px;line-height:20px;color:#334155;-webkit-text-stroke:0.45px #334155;letter-spacing:0.3px;">Invoice History</div>
<svg class="a" style="left:1808px;top:659.3px;" width="14" height="10" viewBox="0 0 14 10"><path d="M2 8L7 2.6 12 8" fill="none" stroke="#1e293b" stroke-width="2.1" stroke-linejoin="miter"/></svg>
<div class="t " style="left:1416.5px;top:701px;font-size:13.9px;line-height:20px;color:#334155;letter-spacing:-0.15px;">Billing Period <span style="color:#ef4444;font-size:17px;line-height:0;vertical-align:-2.5px">*</span></div>
<div class="a" style="left:1416.5px;top:726.4px;width:402.2px;height:35.8px;background:#fff;border:1px solid #cbd5e1;border-radius:5px"></div>
<div class="t " style="left:1428px;top:735px;font-size:13.79px;line-height:19px;color:#334155;letter-spacing:-0.15px;">Yearly</div>
<svg class="a" style="left:1798px;top:741px;" width="10" height="6" viewBox="0 0 10 6"><path d="M0 0.5h10L5 5.5z" fill="#5b6b80"/></svg>
<div class="t " style="left:1416.5px;top:777px;font-size:13.9px;line-height:20px;color:#334155;letter-spacing:-0.15px;">Generate Invoice Before (In Days)</div>
<div class="a" style="left:1416.5px;top:802.2px;width:402.2px;height:37px;background:#fff;border:1px solid #cbd5e1;border-radius:5px"></div>
<div class="t " style="left:1428px;top:811px;font-size:13.79px;line-height:19px;color:#334155;letter-spacing:-0.15px;">1</div>
<div class="t " style="left:1416.5px;top:849px;font-size:13.9px;line-height:20px;color:#334155;letter-spacing:-0.15px;">Payment Term <span style="color:#ef4444;font-size:17px;line-height:0;vertical-align:-2.5px">*</span></div>
<div class="a" style="left:1402px;top:870px;width:431px;height:20px;overflow:hidden"><div class="a" style="left:14.5px;top:4.7px;width:402.2px;height:37px;background:#fff;border:1px solid #cbd5e1;border-radius:5px"></div>
<div class="t " style="left:26px;top:14px;font-size:13.79px;line-height:19px;color:#334155;letter-spacing:-0.15px;">One month term</div>
</div>
<svg class="a" style="left:1836px;top:106px;" width="10" height="7" viewBox="0 0 10 7"><path d="M0.5 6.5h9L5 0.5z" fill="#bdbcc2" stroke="#bdbcc2" stroke-width="1" stroke-linejoin="round"/></svg>
<div class="a" style="left:1836.3px;top:121px;width:9.4px;height:436.6px;background:#bdbcc2;border-radius:5px"></div>
<svg class="a" style="left:1836px;top:875px;" width="10" height="7" viewBox="0 0 10 7"><path d="M0.5 0.5h9L5 6.5z" fill="#bdbcc2" stroke="#bdbcc2" stroke-width="1" stroke-linejoin="round"/></svg>

</div>
</body></html>
